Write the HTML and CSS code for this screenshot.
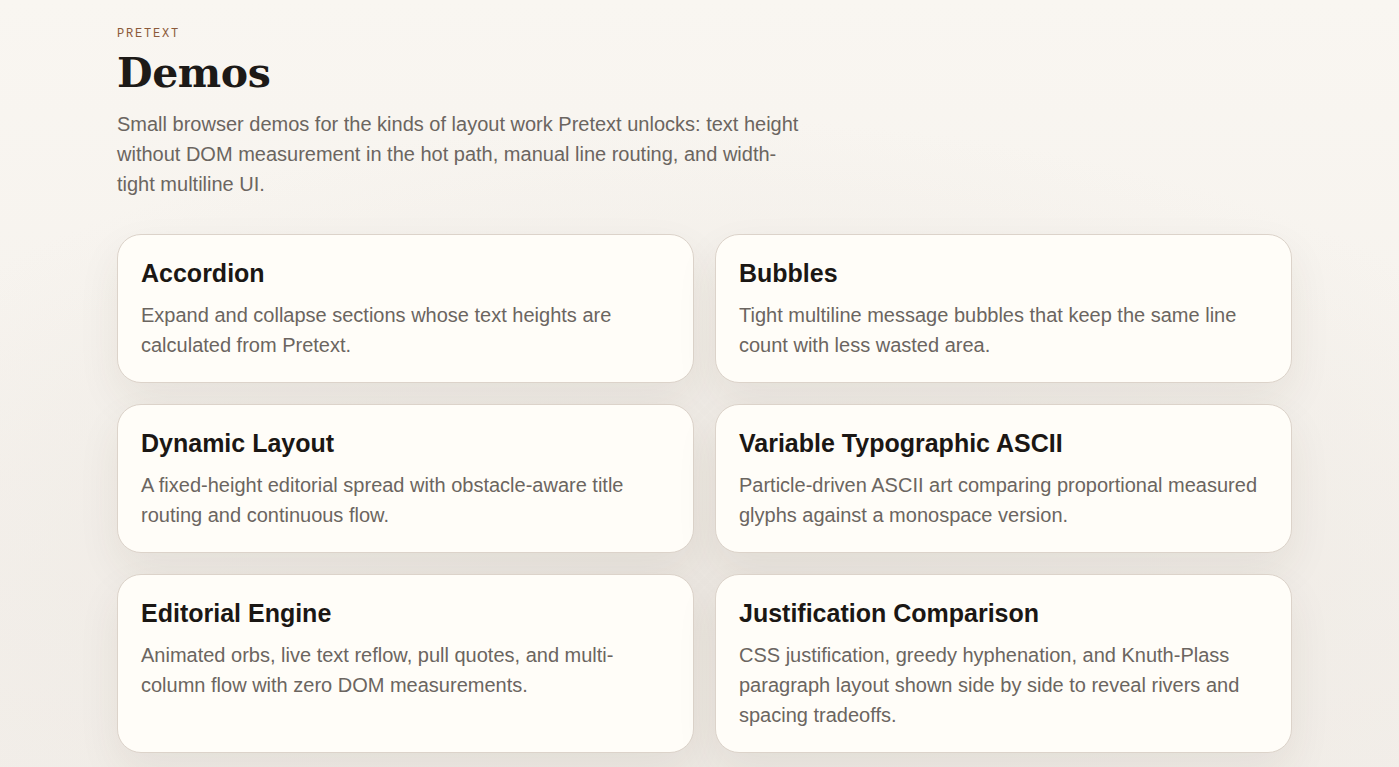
FILE: index.html
```html
<!DOCTYPE html>
<html lang="en">
<head>
<meta charset="utf-8">
<title>Pretext Demos</title>
<link rel="stylesheet" href="styles.css">
</head>
<body>
<main class="page">
  <header class="intro">
    <p class="eyebrow">PRETEXT</p>
    <h1 class="title">Demos</h1>
    <p class="lede">Small browser demos for the kinds of layout work Pretext unlocks: text height without DOM measurement in the hot path, manual line routing, and width-tight multiline UI.</p>
  </header>
  <section class="grid">
    <a class="card" href="#">
      <h2 class="card-title">Accordion</h2>
      <p class="card-desc">Expand and collapse sections whose text heights are calculated from Pretext.</p>
    </a>
    <a class="card" href="#">
      <h2 class="card-title">Bubbles</h2>
      <p class="card-desc">Tight multiline message bubbles that keep the same line count with less wasted area.</p>
    </a>
    <a class="card" href="#">
      <h2 class="card-title">Dynamic Layout</h2>
      <p class="card-desc">A fixed-height editorial spread with obstacle-aware title routing and continuous flow.</p>
    </a>
    <a class="card" href="#">
      <h2 class="card-title">Variable Typographic ASCII</h2>
      <p class="card-desc">Particle-driven ASCII art comparing proportional measured glyphs against a monospace version.</p>
    </a>
    <a class="card" href="#">
      <h2 class="card-title">Editorial Engine</h2>
      <p class="card-desc">Animated orbs, live text reflow, pull quotes, and multi-column flow with zero DOM measurements.</p>
    </a>
    <a class="card" href="#">
      <h2 class="card-title">Justification Comparison</h2>
      <p class="card-desc">CSS justification, greedy hyphenation, and Knuth-Plass paragraph layout shown side by side to reveal rivers and spacing tradeoffs.</p>
    </a>
  </section>
</main>
</body>
</html>
```

FILE: styles.css
```css
* { box-sizing: border-box; }

html, body {
  margin: 0;
  padding: 0;
}

body {
  min-height: 100vh;
  font-family: "Liberation Sans", Arial, sans-serif;
  color: #1d1a17;
  background:
    radial-gradient(ellipse 70% 60% at 50% 75%, #ece7e1 0%, rgba(236,231,225,0) 100%),
    linear-gradient(180deg, #f9f6f1 0%, #f3efea 100%);
}

.page {
  width: 1175px;
  margin: 0 0 0 117px;
  padding: 26px 0 40px;
}

.eyebrow {
  margin: 0;
  font-family: "Liberation Mono", "Courier New", monospace;
  font-size: 12px;
  line-height: 16px;
  letter-spacing: 0.15em;
  color: #8c5a3a;
}

.title {
  margin: 5px 0 0;
  font-family: "DejaVu Serif", "Liberation Serif", serif;
  font-weight: 700;
  font-size: 41px;
  line-height: 52px;
  letter-spacing: -0.01em;
  color: #1d1a17;
}

.lede {
  margin: 10px 0 0;
  max-width: 692px;
  font-size: 20px;
  line-height: 30px;
  color: #6b6560;
}

.grid {
  margin-top: 35px;
  display: grid;
  grid-template-columns: 1fr 1fr;
  gap: 21px 21px;
}

.card {
  display: block;
  text-decoration: none;
  background: #fffdf8;
  border: 1px solid #dcd3ca;
  border-radius: 24px;
  padding: 23px 23px 22px;
  box-shadow: 0 18px 44px rgba(70, 50, 30, 0.07);
}

.card-title {
  margin: 0;
  font-size: 25px;
  line-height: 30px;
  font-weight: 700;
  color: #1b1714;
}

.card-desc {
  margin: 12px 0 0;
  font-size: 20px;
  line-height: 30px;
  color: #6b6560;
}
```
